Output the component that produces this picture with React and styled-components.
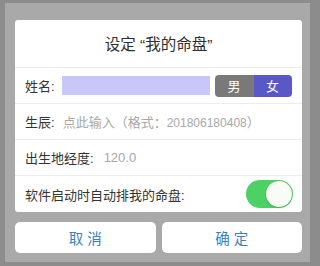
import React from "react";
import styled, { createGlobalStyle } from "styled-components";

const Global = createGlobalStyle`
  html, body { margin: 0; padding: 0; }
  body {
    width: 320px; height: 266px; overflow: hidden;
    font-family: "Liberation Sans", "Noto Sans CJK SC", sans-serif;
  }
`;

const Screen = styled.div`
  width: 320px;
  height: 266px;
  background: #8c8c8c;
  display: flex;
  box-sizing: border-box;
  padding: 3px 10px 4px 5px;
`;

const Overlay = styled.div`
  flex: 1;
  background: #a9a9a9;
  padding: 17px 8px 0 10px;
  display: flex;
  flex-direction: column;
`;

const Dialog = styled.div`
  background: #fff;
  border-radius: 3px;
  display: flex;
  flex-direction: column;
`;

const Title = styled.div`
  height: 48px;
  display: flex;
  align-items: center;
  justify-content: center;
  font-size: 15.5px;
  color: #2e2e2e;
  border-bottom: 1px solid #ececec;
  box-sizing: border-box;
  padding-bottom: 2px;
`;

const Row = styled.div`
  height: 36px;
  box-sizing: border-box;
  display: flex;
  align-items: center;
  padding: 0 ${(p) => p.$pr || 10}px 0 10px;
  font-size: 13px;
  color: #333;
  border-bottom: ${(p) => (p.$last ? "none" : "1px solid #ececec")};
`;

const Label = styled.span`
  white-space: nowrap;
  margin-right: ${(p) => p.$gap || 4}px;
`;

const Placeholder = styled.span`
  color: #a8a8a8;
  white-space: nowrap;
`;

const Digits = styled.span`
  font-size: 12px;
`;

const NameInput = styled.div`
  width: 148px;
  height: 19px;
  background: #c9c7f7;
  margin-right: 5px;
`;

const Seg = styled.div`
  display: flex;
  height: 22px;
  border-radius: 4px;
  overflow: hidden;
`;

const SegItem = styled.div`
  width: ${(p) => p.$w}px;
  display: flex;
  align-items: center;
  justify-content: center;
  color: #fff;
  font-size: 13px;
  background: ${(p) => (p.$active ? "#5a58c6" : "#797979")};
`;

const Spacer = styled.div`
  flex: 1;
`;

const Toggle = styled.div`
  width: 47px;
  height: 28px;
  border-radius: 14px;
  background: #4bd164;
  position: relative;
`;

const Knob = styled.div`
  position: absolute;
  right: 1px;
  top: 1px;
  width: 26px;
  height: 26px;
  border-radius: 50%;
  background: #f8fbf6;
  box-shadow: 0 1px 2px rgba(0, 0, 0, 0.2);
`;

const Buttons = styled.div`
  display: flex;
  gap: 6px;
  margin-top: 10px;
`;

const Button = styled.div`
  flex: 1;
  height: 31px;
  background: #fff;
  border-radius: 5px;
  display: flex;
  align-items: center;
  justify-content: center;
  color: #3b7fc0;
  font-size: 14.5px;
  letter-spacing: 4px;
  padding-left: 4px;
`;

export default function App() {
  return (
    <>
      <Global />
      <Screen>
        <Overlay>
          <Dialog>
            <Title>设定 “我的命盘”</Title>
            <Row>
              <Label $gap={7}>姓名:</Label>
              <NameInput />
              <Seg>
                <SegItem $w={39}>男</SegItem>
                <SegItem $w={38} $active>女</SegItem>
              </Seg>
            </Row>
            <Row>
              <Label $gap={8}>生辰:</Label>
              <Placeholder>
                点此输入（格式：<Digits>201806180408</Digits>）
              </Placeholder>
            </Row>
            <Row>
              <Label $gap={10}>出生地经度:</Label>
              <Placeholder>120.0</Placeholder>
            </Row>
            <Row $last $pr={9}>
              <Label>软件启动时自动排我的命盘:</Label>
              <Spacer />
              <Toggle>
                <Knob />
              </Toggle>
            </Row>
          </Dialog>
          <Buttons>
            <Button>取消</Button>
            <Button>确定</Button>
          </Buttons>
        </Overlay>
      </Screen>
    </>
  );
}
